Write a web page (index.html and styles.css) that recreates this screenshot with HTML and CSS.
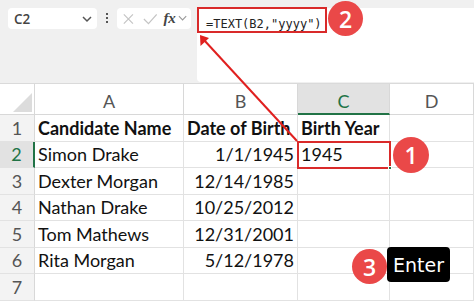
FILE: index.html
```html
<!DOCTYPE html>
<html lang="en">
    <head>
        <meta charset="UTF-8">
        <title>TEXT year</title>
        <link rel="stylesheet" href="styles.css">
    </head>
    <body>
        <div class="toolbar">
            <div class="namebox">
                <span>C2</span>
                <svg width="12" height="8" viewBox="0 0 12 8"><path d="M2 2 L6 6 L10 2" fill="none" stroke="#555" stroke-width="1.5"/></svg>
            </div>
            <div class="dots">
                <span></span><span></span><span></span>
            </div>
            <div class="fnbox">
                <svg width="14" height="14" viewBox="0 0 14 14"><path d="M2 2 L12 12 M12 2 L2 12" stroke="#c4c4c4" stroke-width="1.3"/></svg>
                <svg width="16" height="14" viewBox="0 0 16 14"><path d="M1 7 L6 12 L15 2" fill="none" stroke="#c4c4c4" stroke-width="1.3"/></svg>
                <span class="fx">fx</span>
                <svg width="10" height="7" viewBox="0 0 10 7"><path d="M1 1 L5 5 L9 1" fill="none" stroke="#999" stroke-width="1.2"/></svg>
            </div>
            <div class="formula">
                <span class="formula-text">=TEXT(B2,"yyyy")</span>
            </div>
        </div>

        <div class="sheet">
            <div class="corner"></div>
            <div class="colhead">A</div>
            <div class="colhead">B</div>
            <div class="colhead active">C</div>
            <div class="colhead">D</div>

            <div class="rowhead">1</div>
            <div class="cell bold">Candidate Name</div>
            <div class="cell bold">Date of Birth</div>
            <div class="cell bold">Birth Year</div>
            <div class="cell"></div>

            <div class="rowhead active">2</div>
            <div class="cell">Simon Drake</div>
            <div class="cell num">1/1/1945</div>
            <div class="cell">1945</div>
            <div class="cell"></div>

            <div class="rowhead">3</div>
            <div class="cell">Dexter Morgan</div>
            <div class="cell num">12/14/1985</div>
            <div class="cell"></div>
            <div class="cell"></div>

            <div class="rowhead">4</div>
            <div class="cell">Nathan Drake</div>
            <div class="cell num">10/25/2012</div>
            <div class="cell"></div>
            <div class="cell"></div>

            <div class="rowhead">5</div>
            <div class="cell">Tom Mathews</div>
            <div class="cell num">12/31/2001</div>
            <div class="cell"></div>
            <div class="cell"></div>

            <div class="rowhead">6</div>
            <div class="cell">Rita Morgan</div>
            <div class="cell num">5/12/1978</div>
            <div class="cell"></div>
            <div class="cell"></div>

            <div class="rowhead">7</div>
            <div class="cell"></div>
            <div class="cell"></div>
            <div class="cell"></div>
            <div class="cell"></div>
        </div>

        <!-- annotations -->
        <svg class="arrow" width="474" height="305" viewBox="0 0 474 305">
            <line x1="297" y1="141" x2="204" y2="40" stroke="#e0201f" stroke-width="2"/>
            <path d="M200 35 L200.5 46 L209 38 Z" fill="#e0201f"/>
        </svg>
        <div class="mark formula-mark"></div>
        <div class="mark cell-mark"><span class="handle"></span></div>
        <div class="badge badge-1">1</div>
        <div class="badge badge-2">2</div>
        <div class="badge badge-3">3</div>
        <div class="key">Enter</div>
    </body>
</html>
```
FILE: styles.css
```css
* {
    box-sizing: border-box;
}
body {
    margin: 0;
    width: 474px;
    height: 305px;
    overflow: hidden;
    position: relative;
    background: #fff;
    font-family: "Open Sans", Roboto, sans-serif;
}
.toolbar {
    display: flex;
    align-items: flex-start;
    height: 84px;
    padding: 8px 0 0 8px;
    background: #f0f0f0;
    border-bottom: 1px solid #dadada;
}
.namebox {
    display: flex;
    align-items: center;
    justify-content: space-between;
    width: 89px;
    height: 21px;
    padding: 0 4px 0 6px;
    background: #fff;
    border-radius: 4px;
    font-size: 13.5px;
    font-weight: 600;
    color: #444;
}
.dots {
    display: flex;
    flex-direction: column;
    gap: 2px;
    width: 20px;
    align-items: center;
    padding-top: 5px;
}
.dots span {
    width: 2px;
    height: 2px;
    background: #555;
}
.fnbox {
    display: flex;
    align-items: center;
    gap: 8px;
    width: 74px;
    height: 21px;
    padding: 0 4px 0 5px;
    background: #fff;
    border-radius: 4px;
}
.fx {
    font-family: "Liberation Serif", serif;
    font-style: italic;
    font-weight: bold;
    font-size: 15px;
    color: #444;
    margin-left: -2px;
    margin-right: -6px;
}
.formula {
    flex: 1;
    height: 74px;
    margin-left: 6px;
    background: #fff;
    border-radius: 4px 0 0 4px;
    padding: 3px 0 0 9px;
}
.formula-text {
    font-family: "DejaVu Sans Mono", monospace;
    font-size: 12px;
    color: #222;
}
.sheet {
    display: grid;
    grid-template-columns: 35px 149px 114px 92px 1fr;
    grid-template-rows: 31px repeat(7, 26.5px);
    font-family: Lato, "Liberation Sans", sans-serif;
    font-size: 18px;
    color: #111;
}
.corner {
    border-right: 1px solid #d8d8d8;
    border-bottom: 1px solid #d8d8d8;
    position: relative;
}
.corner::after {
    content: "";
    position: absolute;
    right: 2px;
    bottom: 2px;
    width: 19px;
    height: 19px;
    background: #dcdcdc;
    clip-path: polygon(100% 0, 100% 100%, 0 100%);
}
.colhead {
    display: flex;
    align-items: center;
    justify-content: center;
    padding-top: 4px;
    border-right: 1px solid #d8d8d8;
    border-bottom: 1px solid #d8d8d8;
    color: #555;
}
.colhead.active {
    background: #e2e2e2;
    color: #217346;
    border-bottom: 2px solid #217346;
}
.rowhead {
    display: flex;
    align-items: center;
    justify-content: center;
    background: #f3f3f3;
    border-right: 1px solid #d8d8d8;
    border-bottom: 1px solid #e2e2e2;
    color: #555;
}
.rowhead.active {
    background: #e2e2e2;
    color: #217346;
    border-right: 2px solid #217346;
}
.cell {
    display: flex;
    align-items: center;
    padding: 0 3px;
    white-space: nowrap;
    border-right: 1px solid #e2e2e2;
    border-bottom: 1px solid #e2e2e2;
}
.cell.bold {
    font-weight: bold;
}
.cell.num {
    justify-content: flex-end;
}
.arrow {
    position: absolute;
    left: 0;
    top: 0;
    pointer-events: none;
}
.mark {
    position: absolute;
    border: 2px solid #d92a2a;
}
.formula-mark {
    left: 197px;
    top: 7px;
    width: 130px;
    height: 26px;
}
.cell-mark {
    left: 297px;
    top: 141px;
    width: 94px;
    height: 28px;
}
.handle {
    position: absolute;
    right: -3px;
    bottom: -3px;
    width: 4px;
    height: 4px;
    background: #217346;
    border: 1px solid #fff;
}
.badge {
    position: absolute;
    display: flex;
    align-items: center;
    justify-content: center;
    width: 35px;
    height: 35px;
    border-radius: 50%;
    background: #ea4848;
    color: #fff;
    font-family: "Open Sans", sans-serif;
    font-size: 23px;
    font-weight: 600;
}
.badge-1 {
    left: 393px;
    top: 137px;
    width: 36px;
    height: 36px;
}
.badge-2 {
    left: 328px;
    top: 1px;
}
.badge-3 {
    left: 352px;
    top: 249px;
}
.key {
    position: absolute;
    left: 387px;
    top: 247px;
    width: 63px;
    height: 35px;
    display: flex;
    align-items: center;
    justify-content: center;
    background: #000;
    color: #fff;
    border-radius: 4px;
    font-family: "DejaVu Sans", sans-serif;
    font-size: 19px;
}
```
